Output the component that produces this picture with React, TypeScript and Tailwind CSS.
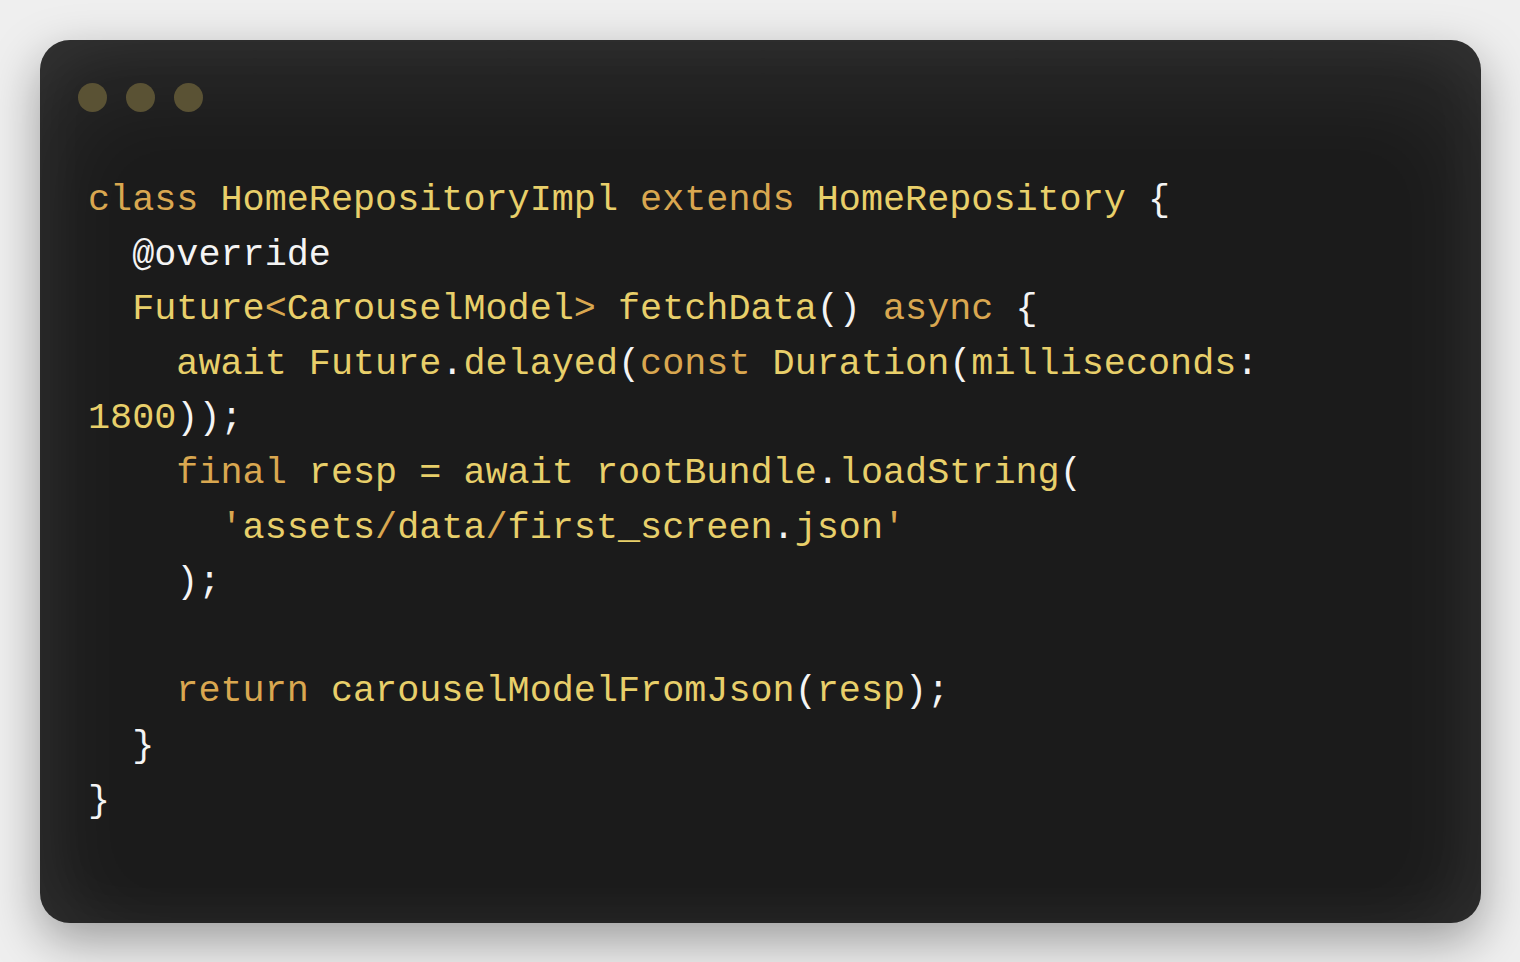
import React from "react";

const K = "text-[#d9a750]"; // keyword orange
const Y = "text-[#e8cf6a]"; // identifier yellow
const W = "text-[#f4f4f4]"; // punctuation white

type Seg = [string, string];

const lines: Seg[][] = [
  [[K, "class"], [Y, " HomeRepositoryImpl "], [K, "extends"], [Y, " HomeRepository "], [W, "{"]],
  [[W, "  @override"]],
  [[Y, "  Future"], [K, "<"], [Y, "CarouselModel"], [K, ">"], [Y, " fetchData"], [W, "()"], [K, " async "], [W, "{"]],
  [[Y, "    await Future"], [W, "."], [Y, "delayed"], [W, "("], [K, "const"], [Y, " Duration"], [W, "("], [Y, "milliseconds"], [W, ":"]],
  [[Y, "1800"], [W, "));"]],
  [[K, "    final"], [Y, " resp = await rootBundle"], [W, "."], [Y, "loadString"], [W, "("]],
  [[K, "      '"], [Y, "assets"], [K, "/"], [Y, "data"], [K, "/"], [Y, "first_screen"], [W, "."], [Y, "json"], [K, "'"]],
  [[W, "    );"]],
  [[W, " "]],
  [[K, "    return"], [Y, " carouselModelFromJson"], [W, "("], [Y, "resp"], [W, ");"]],
  [[W, "  }"]],
  [[W, "}"]],
];

export default function App() {
  return (
    <div className="w-[1520px] h-[962px] bg-[#efefef] pt-[40px] pl-[40px] overflow-hidden">
      <div className="w-[1441px] h-[883px] rounded-[30px] bg-[#1b1b1b] shadow-[0_18px_50px_rgba(0,0,0,0.35),inset_0_40px_110px_rgba(255,255,255,0.08),inset_0_0_70px_rgba(255,255,255,0.05)] pt-[43px] pl-[38px]">
        <div className="flex gap-[19px]">
          <div className="w-[29px] h-[29px] rounded-full bg-[#5a5234]" />
          <div className="w-[29px] h-[29px] rounded-full bg-[#5a5234]" />
          <div className="w-[29px] h-[29px] rounded-full bg-[#5a5234]" />
        </div>
        <div
          className="mt-[61px] pl-[10px] text-[36.8px] leading-[54.6px] whitespace-pre"
          style={{ fontFamily: '"Liberation Mono", "Courier New", monospace' }}
        >
          {lines.map((segs, i) => (
            <div key={i}>
              {segs.map(([c, t], j) => (
                <span key={j} className={c}>
                  {t}
                </span>
              ))}
            </div>
          ))}
        </div>
      </div>
    </div>
  );
}
